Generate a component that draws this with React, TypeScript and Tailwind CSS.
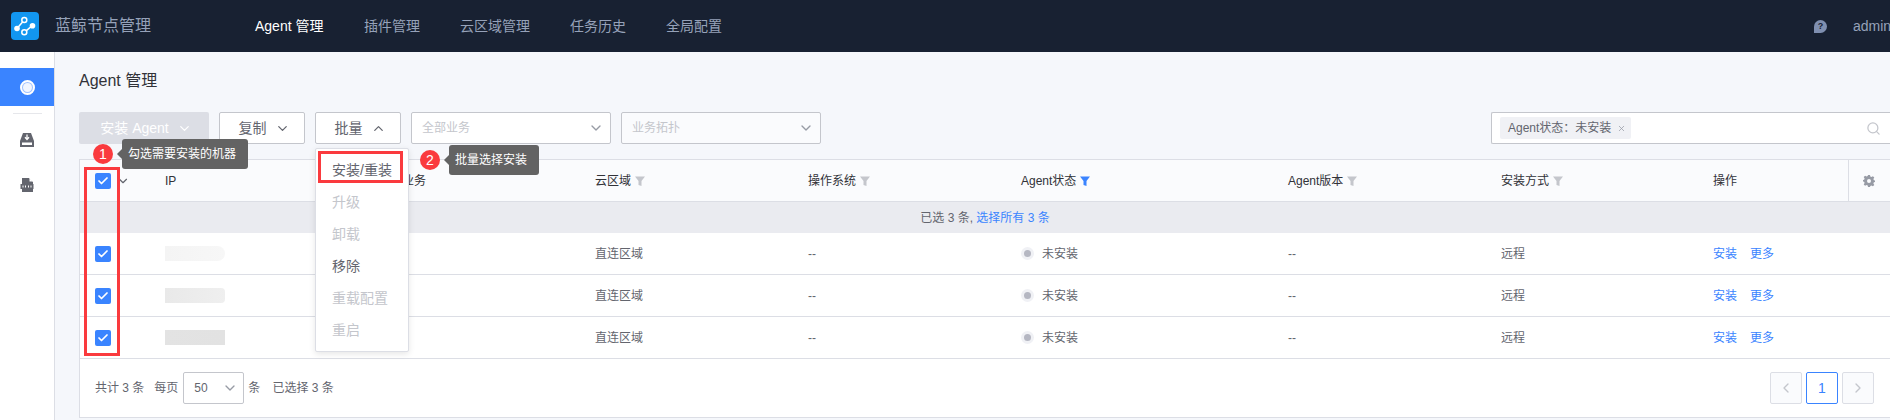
import { ChevronDown, ChevronUp, ChevronLeft, ChevronRight, Search, Check, X } from 'lucide-react'

const columns = [
  { label: '云区域', width: 'w-[213px]', filter: true },
  { label: '操作系统', width: 'w-[213px]', filter: true },
  { label: 'Agent状态', width: 'w-[267px]', filter: true, active: true },
  { label: 'Agent版本', width: 'w-[213px]', filter: true },
  { label: '安装方式', width: 'w-[212px]', filter: true },
]

const rows = [
  { id: 1, blur: 'from-[#f4f4f4] to-[#f7f7f7] rounded-r-lg' },
  { id: 2, blur: 'from-[#e9e9e9] to-[#efefef] rounded-r-sm' },
  { id: 3, blur: 'from-[#e3e3e3] to-[#e2e2e2]' },
]

const menu = [
  { label: '安装/重装', enabled: true },
  { label: '升级' },
  { label: '卸载' },
  { label: '移除', enabled: true },
  { label: '重载配置' },
  { label: '重启' },
]

const FilterIcon = ({ active }: { active?: boolean }) => (
  <svg viewBox="0 0 12 12" className="ml-[3px] h-3 w-3 shrink-0">
    <path d="M1 1.500h10L7.500 6v5l-3-1V6z" fill={active ? '#3a84ff' : '#c4c6cc'} />
  </svg>
)

const Checkbox = () => (
  <span className="flex h-4 w-4 items-center justify-center rounded-[2px] bg-[#3a84ff]">
    <Check size={12} strokeWidth={3.5} className="text-white" />
  </span>
)

const Toolbtn = ({ label, open }: { label: string; open?: boolean }) => (
  <button className="flex h-8 w-[86px] items-center justify-center gap-2 rounded-[2px] border border-[#c4c6cc] bg-white pl-1 text-sm text-[#63656e]">
    {label}
    {open ? <ChevronUp size={15} strokeWidth={2} /> : <ChevronDown size={15} strokeWidth={2} />}
  </button>
)

const Step = ({ n, text, className }: { n: number; text: string; className: string }) => (
  <div className={`absolute flex items-center ${className}`}>
    <span className="flex h-5 w-5 items-center justify-center rounded-full bg-[#fa3a3e] text-sm text-white">{n}</span>
    <span className="ml-[4px] h-0 w-0 border-y-[5px] border-r-[5px] border-y-transparent border-r-[#636363]" />
    <span className="flex h-[30px] items-center whitespace-nowrap rounded-[3px] bg-[#636363] pl-[6px] pr-3 text-xs text-white">{text}</span>
  </div>
)

export default function App() {
  return (
    <div className="relative h-[420px] w-[1890px] overflow-hidden bg-[#f5f7fb] font-['Liberation_Sans','Noto_Sans_CJK_SC',sans-serif] text-xs text-[#63656e]">
      {/* Top bar */}
      <header className="flex h-[52px] items-center bg-[#182132] pl-[11px]">
        <span className="flex h-7 w-7 items-center justify-center rounded-[4px] bg-[#1296f0]">
          <svg viewBox="0 0 28 28" className="h-7 w-7" fill="none">
            <path d="M6 16.500L13.300 8M21.300 13.700L13.300 20.300" stroke="#fff" strokeWidth="1.500" />
            <circle cx="6" cy="16.500" r="2.800" fill="#fff" />
            <circle cx="21.500" cy="13.700" r="2.800" fill="#fff" />
            <circle cx="13.300" cy="8" r="2.500" fill="#1296f0" stroke="#fff" strokeWidth="1.500" />
            <circle cx="13.300" cy="20.300" r="2.500" fill="#1296f0" stroke="#fff" strokeWidth="1.500" />
          </svg>
        </span>
        <span className="ml-4 w-[200px] text-base text-[#96a2b9]">蓝鲸节点管理</span>
        <nav className="flex items-center text-sm text-[#96a2b9]">
          <span className="w-[109px] text-white">Agent 管理</span>
          <span className="w-[96px]">插件管理</span>
          <span className="w-[110px]">云区域管理</span>
          <span className="w-[96px]">任务历史</span>
          <span>全局配置</span>
        </nav>
        <span className="ml-auto flex h-[13px] w-[13px] items-center justify-center rounded-full rounded-bl-[2px] bg-[#7f8fb0] text-[9px] font-bold text-[#182132]">?</span>
        <span className="ml-[26px] w-[37px] whitespace-nowrap text-sm text-[#96a2b9]">admin</span>
      </header>

      <div className="flex h-[368px]">
        {/* Side menu */}
        <aside className="flex w-[55px] shrink-0 flex-col items-center border-r border-[#dcdee5] bg-white pt-4">
          <div className="flex h-[38px] w-full items-center justify-center bg-[#3a84ff]">
            <span className="flex h-[15px] w-[15px] items-center justify-center rounded-full border-2 border-white bg-[#9fc1ff]">
              <span className="h-[9px] w-[9px] rounded-full bg-[#f2f6ff]" />
            </span>
          </div>
          <div className="mt-[7px] h-px w-[29px] bg-[#e6e7eb]" />
          <svg viewBox="0 0 16 16" className="mt-[18px] h-4 w-4">
            <path d="M4 1h8l3 8v6H1V9z" fill="#63656e" />
            <rect x="3" y="10.500" width="10" height="2.500" fill="#fff" />
            <path d="M8 2.500v4.500M6 5.300L8 7.500l2-2.200" stroke="#fff" strokeWidth="1.300" fill="none" />
          </svg>
          <svg viewBox="0 0 16 16" className="mt-[29px] h-4 w-4">
            <path d="M3 1h7l4 4v10H3z" fill="#63656e" />
            <path d="M10.500 1l3.500 3.500h-3.500z" fill="#fff" />
            <rect x="1.500" y="7" width="13" height="5" fill="#63656e" />
            <path d="M4 8.500v2M6.500 8.500v2M9.500 8.500v2M12 8.500v2" stroke="#fff" strokeWidth="1" />
          </svg>
        </aside>

        <main className="min-w-0 flex-1 pl-6">
          <h1 className="flex h-[58px] items-center text-base text-[#313238]">Agent 管理</h1>

          {/* Toolbar */}
          <div className="mt-[2px] flex h-8 items-center">
            <button className="flex h-8 w-[130px] items-center justify-center gap-2 rounded-[2px] bg-[#dcdee5] pl-1 text-sm text-white">
              安装 Agent
              <ChevronDown size={15} strokeWidth={2} />
            </button>
            <div className="ml-[10px] flex gap-[10px]">
              <Toolbtn label="复制" />
              <Toolbtn label="批量" open />
            </div>
            <div className="ml-[10px] flex h-8 w-[200px] items-center justify-between rounded-[2px] border border-[#c4c6cc] bg-white pl-[10px] pr-[6px] text-xs text-[#c4c6cc]">
              全部业务
              <ChevronDown size={16} className="text-[#979ba5]" />
            </div>
            <div className="ml-[10px] flex h-8 w-[200px] items-center justify-between rounded-[2px] border border-[#c4c6cc] bg-[#fafbfd] pl-[10px] pr-[6px] text-xs text-[#c4c6cc]">
              业务拓扑
              <ChevronDown size={16} className="text-[#979ba5]" />
            </div>
            <div className="ml-[670px] flex h-8 min-w-0 flex-1 items-center justify-between rounded-l-[2px] border border-r-0 border-[#c4c6cc] bg-white pl-2 pr-[9px]">
              <span className="flex h-[22px] w-[131px] items-center gap-[6px] rounded-[2px] bg-[#f0f1f5] pl-2 text-xs">
                Agent状态：未安装
                <X size={9} className="text-[#979ba5]" />
              </span>
              <Search size={15} className="text-[#c4c6cc]" />
            </div>
          </div>

          {/* Table */}
          <section className="mt-[15px] border-y border-l border-[#dcdee5] bg-white">
            <div className="flex h-[42px] items-center border-b border-[#dcdee5] bg-[#fafbfd] text-[#313238]">
              <div className="flex w-[70px] items-center pl-[15px]">
                <Checkbox />
                <ChevronDown size={14} className="ml-[5px] text-[#63656e]" />
              </div>
              <div className="w-[237px] pl-[15px]">IP</div>
              <div className="w-[193px] pl-[15px]">业务</div>
              {columns.map((col) => (
                <div key={col.label} className={`flex items-center pl-[15px] ${col.width}`}>
                  {col.label}
                  <FilterIcon active={col.active} />
                </div>
              ))}
              <div className="w-[150px] pl-[15px]">操作</div>
              <div className="flex h-full flex-1 items-center border-l border-[#dcdee5] pl-[14px]">
                <svg viewBox="0 0 12 12" className="h-3 w-3" fill="#979ba5">
                  <path fillRule="evenodd" d="M5 0h2l.3 1.600 1.200.5L9.900 1.200 11.300 2.600l-.9 1.400.5 1.200L12 5.500v1.500l-1.100.3-.5 1.200.9 1.400-1.400 1.400-1.400-.9-1.200.5L7 12H5l-.3-1.600-1.200-.5-1.400.9L.7 9.400l.9-1.400-.5-1.200L0 6.500V5l1.100-.3.5-1.200-.9-1.400L2.100.7l1.400.9 1.200-.5zM6 4a2 2 0 100 4 2 2 0 000-4z" />
                </svg>
              </div>
            </div>

            <div className="flex h-[31px] items-center justify-center bg-[#eaebf0]">
              已选 3 条,&nbsp;<span className="text-[#3a84ff]">选择所有 3 条</span>
            </div>

            {rows.map((row) => (
              <div key={row.id} className="flex h-[42px] items-center border-b border-[#dcdee5]">
                <div className="w-[70px] pl-[15px]">
                  <Checkbox />
                </div>
                <div className="w-[237px] pl-[15px]">
                  <div className={`h-[15px] w-[60px] bg-gradient-to-r ${row.blur}`} />
                </div>
                <div className="w-[193px]" />
                <div className="w-[213px] pl-[15px]">直连区域</div>
                <div className="w-[213px] pl-[15px]">--</div>
                <div className="flex w-[267px] items-center pl-[15px]">
                  <span className="flex h-[13px] w-[13px] items-center justify-center rounded-full bg-[#f0f1f5]">
                    <span className="h-[7px] w-[7px] rounded-full bg-[#b5b7c2]" />
                  </span>
                  <span className="ml-2">未安装</span>
                </div>
                <div className="w-[213px] pl-[15px]">--</div>
                <div className="w-[212px] pl-[15px]">远程</div>
                <div className="flex gap-[13px] pl-[15px] text-[#3a84ff]">
                  <span>安装</span>
                  <span>更多</span>
                </div>
              </div>
            ))}

            {/* Footer */}
            <div className="flex h-[58px] items-center pl-[15px] pr-[16px]">
              <span>共计 3 条</span>
              <span className="ml-[10px]">每页</span>
              <div className="ml-[5px] flex h-8 w-[61px] items-center justify-between rounded-[2px] border border-[#c4c6cc] pl-[10px] pr-[5px]">
                50
                <ChevronDown size={16} className="text-[#979ba5]" />
              </div>
              <span className="ml-1">条</span>
              <span className="ml-3">已选择 3 条</span>
              <div className="ml-auto flex gap-1">
                <span className="flex h-8 w-8 items-center justify-center rounded-[2px] border border-[#dcdee5] bg-[#fafbfd] text-[#c4c6cc]">
                  <ChevronLeft size={16} />
                </span>
                <span className="flex h-8 w-8 items-center justify-center rounded-[2px] border border-[#3a84ff] text-sm text-[#3a84ff]">1</span>
                <span className="flex h-8 w-8 items-center justify-center rounded-[2px] border border-[#dcdee5] bg-[#fafbfd] text-[#c4c6cc]">
                  <ChevronRight size={16} />
                </span>
              </div>
            </div>
          </section>
        </main>
      </div>

      {/* Batch dropdown */}
      <ul className="absolute left-[315px] top-[148px] w-[94px] rounded-[2px] border border-[#dcdee5] bg-white py-[5px] text-sm shadow-[0_2px_6px_rgba(0,0,0,0.1)]">
        {menu.map((item) => (
          <li key={item.label} className={`flex h-8 items-center whitespace-nowrap pl-4 ${item.enabled ? 'text-[#63656e]' : 'text-[#c4c6cc]'}`}>
            {item.label}
          </li>
        ))}
      </ul>

      {/* Red highlight boxes */}
      <div className="absolute left-[84px] top-[167px] h-[189px] w-[36px] border-[3px] border-[#fa3a3e]" />
      <div className="absolute left-[318px] top-[151px] h-[32px] w-[85px] border-[3px] border-[#fa3a3e]" />

      <Step n={1} text="勾选需要安装的机器" className="left-[93px] top-[139px]" />
      <Step n={2} text="批量选择安装" className="left-[420px] top-[145px]" />
    </div>
  )
}
